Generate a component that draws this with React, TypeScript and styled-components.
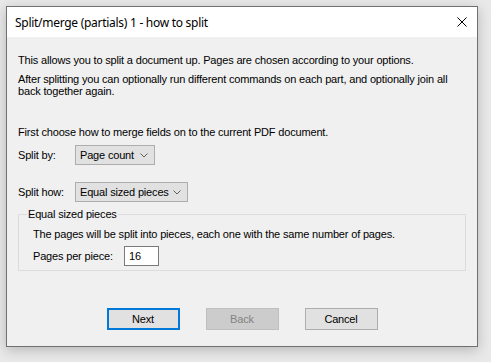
import React from 'react'
import styled, { createGlobalStyle } from 'styled-components'

const GlobalStyle = createGlobalStyle`
  html, body {
    margin: 0;
    padding: 0;
    background: #e9e9e9;
  }
  body {
    width: 491px;
    height: 362px;
    overflow: hidden;
  }
`

const Window = styled.div`
  margin: 6px 0 0 6px;
  width: 470px;
  height: 339px;
  border: 1px solid #707070;
  background: #f0f0f0;
  box-shadow: 0 3px 12px rgba(0, 0, 0, 0.22);
  display: flex;
  flex-direction: column;
  font-family: 'Liberation Sans', Arial, sans-serif;
  font-size: 11px;
  letter-spacing: -0.17px;
  color: #000;
`

const TitleBar = styled.div`
  height: 30px;
  background: #fff;
  display: flex;
  align-items: center;
  justify-content: space-between;
  padding: 0 10px 0 8px;
`

const Title = styled.span`
  font-family: 'Noto Sans', 'Open Sans', sans-serif;
  font-size: 12px;
  letter-spacing: -0.28px;
  color: #000;
`

const CloseIcon = styled.svg`
  width: 10px;
  height: 10px;
  display: block;
`

const Body = styled.div`
  flex: 1;
  padding: 17px 11px 0 11px;
  display: flex;
  flex-direction: column;
`

const Para = styled.p<{ $gap?: number }>`
  margin: ${p => p.$gap ?? 0}px 0 0 0;
  line-height: 12px;
`

const Row = styled.div<{ $gap: number }>`
  display: flex;
  align-items: center;
  margin-top: ${p => p.$gap}px;
  height: 20px;
`

const Label = styled.span<{ $w: number }>`
  width: ${p => p.$w}px;
  flex: none;
`

const Combo = styled.div<{ $w: number }>`
  width: ${p => p.$w}px;
  height: 20px;
  box-sizing: border-box;
  border: 1px solid #adadad;
  background: #e1e1e1;
  display: flex;
  align-items: center;
  justify-content: space-between;
  padding: 0 6px 0 4px;
`

const Chevron = styled.svg`
  width: 8px;
  height: 5px;
  display: block;
`

const Group = styled.fieldset`
  margin: 6px 0 0 0;
  padding: 8px 14px 0 14px;
  height: 63px;
  box-sizing: border-box;
  border: 1px solid #dcdcdc;
  min-inline-size: 0;
`

const Legend = styled.legend`
  padding: 0 1px;
  margin-left: -6px;
  line-height: 12px;
`

const Field = styled.div`
  width: 35px;
  height: 20px;
  box-sizing: border-box;
  border: 1px solid #7a7a7a;
  background: #fff;
  padding: 0 4px;
  display: flex;
  align-items: center;
`

const Buttons = styled.div`
  display: flex;
  justify-content: center;
  gap: 26px;
  margin-top: 37px;
`

const Button = styled.button<{ $primary?: boolean }>`
  width: 73px;
  height: 22px;
  box-sizing: border-box;
  font-family: 'Liberation Sans', Arial, sans-serif;
  font-size: 11px;
  letter-spacing: -0.17px;
  color: #000;
  background: #e1e1e1;
  border: 1px solid #adadad;
  padding: 0;
  ${p => p.$primary && `border: 2px solid #0078d7;`}
  &:disabled {
    background: #cccccc;
    border-color: #bfbfbf;
    color: #838383;
  }
`

const App = () => {
  return (
    <>
      <GlobalStyle />
      <Window>
        <TitleBar>
          <Title>Split/merge (partials) 1 - how to split</Title>
          <CloseIcon viewBox="0 0 10 10">
            <path d="M0.5 0.5 L9.5 9.5 M9.5 0.5 L0.5 9.5" stroke="#000" strokeWidth="1" />
          </CloseIcon>
        </TitleBar>
        <Body>
          <Para>This allows you to split a document up. Pages are chosen according to your options.</Para>
          <Para $gap={7}>
            After splitting you can optionally run different commands on each part, and optionally join all
            <br />back together again.
          </Para>
          <Para $gap={29}>First choose how to merge fields on to the current PDF document.</Para>
          <Row $gap={7}>
            <Label $w={57}>Split by:</Label>
            <Combo $w={80}>
              <span>Page count</span>
              <Chevron viewBox="0 0 8 5">
                <path d="M0.5 0.5 L4 4 L7.5 0.5" stroke="#606060" fill="none" strokeWidth="1" />
              </Chevron>
            </Combo>
          </Row>
          <Row $gap={17}>
            <Label $w={57}>Split how:</Label>
            <Combo $w={113}>
              <span>Equal sized pieces</span>
              <Chevron viewBox="0 0 8 5">
                <path d="M0.5 0.5 L4 4 L7.5 0.5" stroke="#606060" fill="none" strokeWidth="1" />
              </Chevron>
            </Combo>
          </Row>
          <Group>
            <Legend>Equal sized pieces</Legend>
            <Para>The pages will be split into pieces, each one with the same number of pages.</Para>
            <Row $gap={6}>
              <Label $w={91}>Pages per piece:</Label>
              <Field>16</Field>
            </Row>
          </Group>
          <Buttons>
            <Button $primary>Next</Button>
            <Button disabled>Back</Button>
            <Button>Cancel</Button>
          </Buttons>
        </Body>
      </Window>
    </>
  )
}

export default App
